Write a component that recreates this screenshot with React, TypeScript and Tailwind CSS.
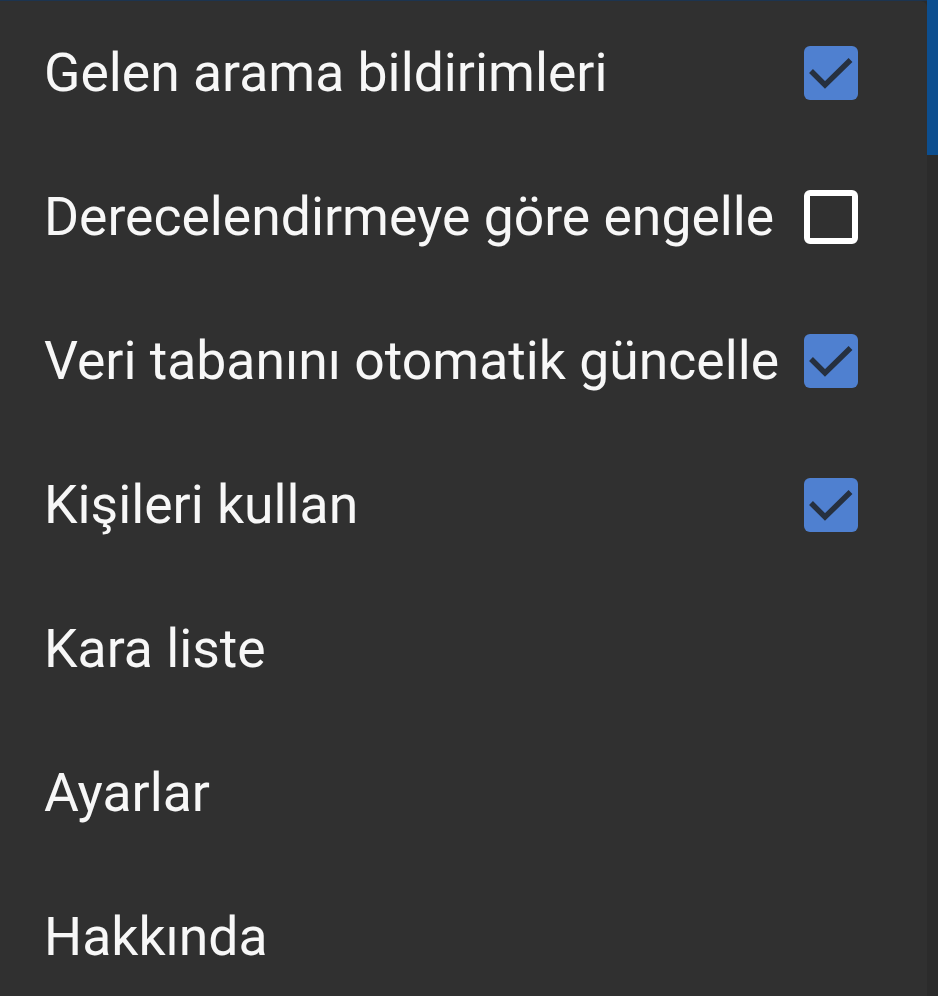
const ITEMS: { label: string; checked?: boolean }[] = [
  { label: "Gelen arama bildirimleri", checked: true },
  { label: "Derecelendirmeye göre engelle", checked: false },
  { label: "Veri tabanını otomatik güncelle", checked: true },
  { label: "Kişileri kullan", checked: true },
  { label: "Kara liste" },
  { label: "Ayarlar" },
  { label: "Hakkında" },
]

function Checkbox({ checked }: { checked: boolean }) {
  if (!checked) {
    return <div className="w-[54px] h-[54px] rounded-[6px] border-[6px] border-white shrink-0" />
  }
  return (
    <div className="w-[54px] h-[54px] rounded-[6px] bg-[#4f80d0] shrink-0 flex items-center justify-center">
      <svg width="54" height="54" viewBox="0 0 54 54">
        <path d="M7 25 L21 39 L46.5 14" fill="none" stroke="#26303f" strokeWidth="5.5" />
      </svg>
    </div>
  )
}

export default function App() {
  return (
    <div className="w-[938px] h-[996px] flex bg-[#2b2b2b] overflow-hidden" style={{ fontFamily: "Roboto, 'Noto Sans', sans-serif" }}>
      <div className="w-[927px] flex flex-col">
        <div className="h-[1px] bg-[#1c3450] shrink-0" />
        <div className="flex-1 bg-[#303030] rounded-tr-[6px]">
          {ITEMS.map((item) => (
            <div key={item.label} className="h-[144px] flex items-center justify-between pl-[44px] pr-[69px]">
              <span className="text-[53.5px] leading-none text-[#f7f7f7] whitespace-nowrap">{item.label}</span>
              {item.checked !== undefined && <Checkbox checked={item.checked} />}
            </div>
          ))}
        </div>
      </div>
      <div className="flex-1 flex flex-col">
        <div className="h-[155px] bg-[#0c4e8f]" />
        <div className="flex-1 bg-[#2b2b2b]" />
      </div>
    </div>
  )
}
